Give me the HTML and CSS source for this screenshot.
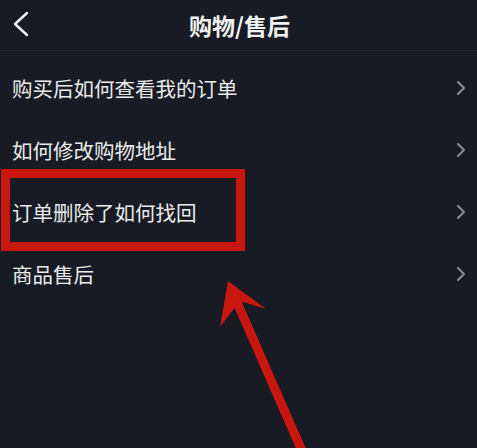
FILE: index.html
```html
<!DOCTYPE html>
<html lang="zh">
<head>
<meta charset="utf-8">
<link rel="stylesheet" href="styles.css">
</head>
<body>
<div class="page">
  <header class="topbar">
    <svg class="back" width="20" height="28" viewBox="0 0 20 28"><polyline points="14,2 2,13 14,24" fill="none" stroke="#f2f2f2" stroke-width="2.4" stroke-linecap="round" stroke-linejoin="round"/></svg>
    <h1 class="title">购物/售后</h1>
  </header>
  <ul class="list">
    <li class="row"><span class="label">购买后如何查看我的订单</span><svg class="chev" width="10" height="16" viewBox="0 0 10 16"><polyline points="2,2 8,8 2,14" fill="none" stroke="#8b8d92" stroke-width="2" stroke-linecap="round" stroke-linejoin="round"/></svg></li>
    <li class="row"><span class="label">如何修改购物地址</span><svg class="chev" width="10" height="16" viewBox="0 0 10 16"><polyline points="2,2 8,8 2,14" fill="none" stroke="#8b8d92" stroke-width="2" stroke-linecap="round" stroke-linejoin="round"/></svg></li>
    <li class="row"><span class="label">订单删除了如何找回</span><svg class="chev" width="10" height="16" viewBox="0 0 10 16"><polyline points="2,2 8,8 2,14" fill="none" stroke="#8b8d92" stroke-width="2" stroke-linecap="round" stroke-linejoin="round"/></svg></li>
    <li class="row"><span class="label">商品售后</span><svg class="chev" width="10" height="16" viewBox="0 0 10 16"><polyline points="2,2 8,8 2,14" fill="none" stroke="#8b8d92" stroke-width="2" stroke-linecap="round" stroke-linejoin="round"/></svg></li>
  </ul>
  <div class="highlight"></div>
  <svg class="arrow" width="477" height="448" viewBox="0 0 477 448">
    <line x1="236" y1="300" x2="306" y2="460" stroke="#c8170e" stroke-width="9"/>
    <polygon points="228,281 266,309 243,302 236,306 220,327" fill="#c8170e"/>
  </svg>
</div>
</body>
</html>
```
FILE: styles.css
```css
html, body {
  margin: 0;
  padding: 0;
  background: #181b23;
}
.page {
  position: relative;
  width: 477px;
  height: 448px;
  overflow: hidden;
  background: #181b23;
  font-family: "Noto Sans CJK SC", "Noto Sans", sans-serif;
  color: #ececec;
}
.topbar {
  height: 50px;
  border-bottom: 1px solid #20242c;
  display: flex;
  align-items: center;
  justify-content: center;
  position: relative;
}
.back {
  position: absolute;
  left: 13px;
  top: 11px;
}
.title {
  margin: 0;
  font-size: 23px;
  font-weight: 700;
  color: #f2f2f2;
  line-height: 1;
  padding-left: 2px;
}
.list {
  list-style: none;
  margin: 6px 0 0;
  padding: 0;
}
.row {
  height: 62px;
  display: flex;
  align-items: center;
  justify-content: space-between;
  padding: 0 11px 0 12px;
}
.label {
  font-size: 20.5px;
  line-height: 1;
  color: #ebebeb;
}
.chev {
  display: block;
}
.highlight {
  position: absolute;
  left: 1px;
  top: 169px;
  width: 226px;
  height: 64px;
  border: 9px solid #c8170e;
}
.arrow {
  position: absolute;
  left: 0;
  top: 0;
}
```
